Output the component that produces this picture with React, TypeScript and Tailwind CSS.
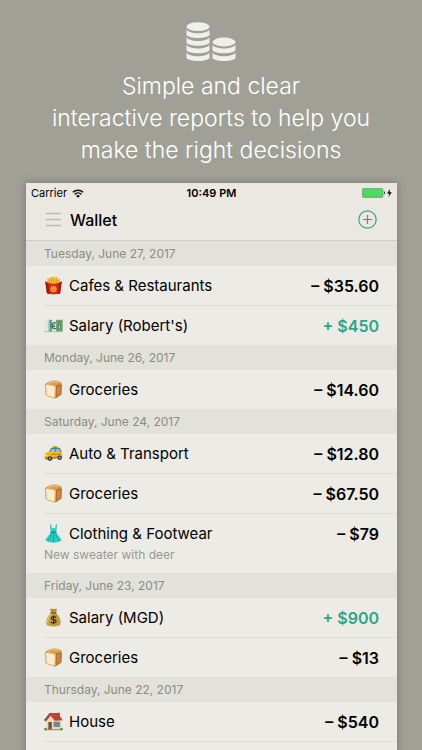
import type { ReactNode } from 'react'

type Entry = { icon: ReactNode; name: string; amount: string; income?: boolean; note?: string }
type Day = { date: string; entries: Entry[] }

function Coins() {
  // each number is the bottom edge of one coin
  const tall = [38, 45.7, 53.3, 61]
  const short = [53.3, 61]
  return (
    <svg width="50" height="40" viewBox="0 22 50 40" fill="#efefec" aria-hidden="true">
      <ellipse cx="12" cy="26.7" rx="11.5" ry="4.4" />
      {tall.map((y) => (
        <path key={y} d={`M.5 ${y - 8.5}c3 5 20 5 23 0v5c0 4.6-23 4.6-23 0z`} />
      ))}
      <ellipse cx="38" cy="42" rx="11.5" ry="4.4" />
      {short.map((y) => (
        <path key={y} d={`M26.5 ${y - 8.5}c3 5 20 5 23 0v5c0 4.6-23 4.6-23 0z`} />
      ))}
    </svg>
  )
}

function Wifi() {
  return (
    <svg width="12" height="9" viewBox="0 0 12 9" fill="none" stroke="#111" strokeWidth="1.5" aria-hidden="true">
      <path d="M.8 3.3a7.5 7.5 0 0 1 10.4 0M2.7 5.4a4.7 4.7 0 0 1 6.6 0" />
      <path d="M6 8.8 4 6.9a2.9 2.9 0 0 1 4 0z" fill="#111" stroke="none" />
    </svg>
  )
}

function Battery() {
  return (
    <svg width="30" height="10" viewBox="0 0 30 10" aria-hidden="true">
      <rect x=".4" y=".4" width="20.6" height="9" rx="1.5" fill="#4cd964" stroke="#6f8f70" strokeWidth=".7" />
      <path d="M22 3.3c1.3.4 1.3 2.8 0 3.2z" fill="#222" />
      <path d="M28.2.8 25 5.600h2.200L26.500 9l3.400-4.800h-2.300z" fill="#111" />
    </svg>
  )
}

const emoji = { width: 19, height: 19, viewBox: '0 0 20 20', 'aria-hidden': true } as const

function Fries() {
  return (
    <svg {...emoji}>
      <path d="M3.5 9 3 2.8 5 2.3l.5 3L6 1h2l.3 3.5L9 .6h2l.3 3.5.9-3.3 2 .3v3.5l1-2.2 1.9.5L16.3 9z" fill="#f6bd35" />
      <path d="M5.3 3v5M7.8 2v6M10.3 1.5V8M13 2v6M15.2 4v4" stroke="#cf8118" strokeWidth=".6" />
      <path d="M1.3 5.5c3 3.4 14.4 3.4 17.4 0L17 18c-.2 1.8-13.8 1.8-14 0z" fill="#d32b1e" />
      <path d="M1.3 5.5 3 18c.2.7 2 1 3 1.1L4.5 7.6zM18.7 5.5 17 18c-.2.7-1.5 1-2.5 1.1l1.2-11.5z" fill="#a91713" />
      <circle cx="10" cy="13.7" r="3.3" fill="#f2a82c" />
      <path d="M8.5 13.9c.8 1.6 2.3 1.6 3 0M8.7 12.3h.8M10.7 12.3h.8" stroke="#b6411a" strokeWidth=".8" fill="none" />
    </svg>
  )
}

function Euro() {
  return (
    <svg {...emoji}>
      <path d="M.3 4h19.4v12.5H.3z" fill="#dfe6dc" />
      <path d="M4.3 4H6v12.5H4.3z" fill="#b5c6c6" />
      <path d="M6 4h2.200v12.5H6z" fill="#3f9a7f" />
      <path d="M12.6 4h7.1v12.5h-7.1z" fill="#7fa377" />
      <path d="M12.8 7.5c-3-1.5-4.2.6-4.2 2.7s1.4 4.2 4.2 2.7M7.8 9.5h3.8M7.8 11h3.8" stroke="#27745a" strokeWidth="1.1" fill="none" />
      <path d="M14.8 14.5v-5l1.4-2 1.5 2v5M13.8 6h5" stroke="#4a7550" strokeWidth=".9" fill="none" />
      <path d="M16.3 9.8v3" stroke="#c9d8b9" strokeWidth="1" />
      <path d="M.3 16.5h19.4" stroke="#9fb29c" strokeWidth=".7" />
    </svg>
  )
}

function Bread() {
  return (
    <svg {...emoji}>
      <path d="M1 4.8C2.5 2.200 8.500.4 12 .6c4.500.3 7.500 2.300 6.800 4.700l-.6 10L12 19.400 1.800 16z" fill="#d99a4e" />
      <path d="M12.3 6.4c1.5-1.3 4.9-2.2 6.5-1.1l-.6 10L12 19.4z" fill="#b9702d" />
      <path d="M13.7 7.3c1-.8 2.6-1.2 3.8-1l-.5 8.2-3.3 2.3z" fill="#c98742" />
      <path d="M.9 5c1.2-1.6 4.5-.8 7.3-.1 3.3.8 5 1.1 4.500 3L12 19.400c-3.800-.7-7-1.600-10.200-3.400L1.600 7.900C.9 7 .6 6 .9 5z" fill="#e2aa63" />
      <path d="M2 5.6c1.5-1 4.3-.1 6.3.4 2.3.5 3.5.9 3.2 2.1L11 18.200c-3.200-.6-5.700-1.400-8.400-2.800l-.1-7.900C1.900 6.900 1.700 6.200 2 5.600z" fill="#faead0" />
      <path d="M4.5 3.4c3-1.4 8-1.8 11-.7" stroke="#edc07f" strokeWidth="1.3" fill="none" />
    </svg>
  )
}

function Taxi() {
  return (
    <svg {...emoji}>
      <path d="M9.5 2h4v2h-4z" fill="#e8aa20" />
      <path d="m5 9 2.300-4.700c2.200-1 7.500-1 9.500 0L19 9z" fill="#547f94" />
      <path d="M6.300 8.800 8 5.200h3.300v3.600zM12.500 5.200h3.600l1.400 3.600h-5z" fill="#78c8df" />
      <path d="M.6 11c.4-1.800 3-2.600 5.400-2.800h12.300c1.300 1.500 1.300 5-.1 6.500L2 16.200C.6 15.800.2 13 .6 11z" fill="#f3b61d" />
      <path d="M1 13.6c4 .5 9 .4 17.900-1.100v1.800L2 16.500z" fill="#bc7819" />
      <path d="M8 11h10" stroke="#363a35" strokeWidth=".8" strokeDasharray="1 1" />
      <circle cx="6.3" cy="15.3" r="2.5" fill="#333b40" />
      <circle cx="6.3" cy="15.3" r="1" fill="#abb3b6" />
      <circle cx="16.5" cy="14.5" r="2.4" fill="#333b40" />
      <circle cx="16.5" cy="14.5" r="1" fill="#abb3b6" />
      <circle cx="2" cy="11.8" r="1.1" fill="#fff3bd" />
    </svg>
  )
}

function Dress() {
  return (
    <svg {...emoji}>
      <path d="M7 .5 7.5 5M13 .5 12.5 5" stroke="#169f9d" strokeWidth="1" />
      <path d="M6.6 3.5c1 1.1 2.3 1.5 3.4.6 1.1.9 2.4.5 3.4-.6L13 8.600c1.300 3.300 4.300 5.400 5.600 8.600-3.500 3.300-13.700 3.300-17.200 0C2.700 14 5.700 11.900 7 8.600z" fill="#2dcbc3" />
      <path d="M8 10c-.8 3-2.300 5-3.700 7.600M10 10v9M12 10c.8 3 2.300 5 3.700 7.600" stroke="#169f9d" strokeWidth=".9" fill="none" />
      <path d="M7 8.7h6" stroke="#107f83" strokeWidth="1.2" />
    </svg>
  )
}

function MoneyBag() {
  return (
    <svg {...emoji}>
      <path d="M6.3 1.300c1.400-1 2.500.3 3.700-.6 1.200.9 2.300-.4 3.700.6L12.400 5H7.600z" fill="#b58e36" />
      <path d="M7.3 5.3h5.4c3.2 2.6 5.3 7 4.8 11.2-.3 3.800-14.700 3.800-15 0C2 12.300 4.100 7.900 7.300 5.300z" fill="#c29c43" />
      <path d="M4 16c-.4-3.600 1.300-7 3.800-9.500" stroke="#e4c778" strokeWidth="1.2" fill="none" />
      <path d="M6.8 5.2h6.4" stroke="#72531e" strokeWidth="1.3" />
      <path d="M12.8 9.9c-1.3-1.3-5.3-1.2-5.2.8.1 2 5.1 1.2 5.2 3.2.1 2.1-4 2.3-5.6.7M10.100 7.800v9.300" stroke="#3a3017" strokeWidth="1.3" fill="none" />
    </svg>
  )
}

function House() {
  return (
    <svg {...emoji}>
      <path d="M14.3.8h2.400v6h-2.400z" fill="#9c4439" />
      <path d="M2.5 9 7 3.500l11 5.300v9.700H2.500z" fill="#ead9b4" />
      <path d="M.3 8.800 6.500 1h8.200l5 7.700-8.400.4L7 4 2 10z" fill="#b8443c" />
      <path d="M.3 8.800 6.500 1" stroke="#7d302c" strokeWidth="1" />
      <path d="M4.6 10.500h3.600v8H4.600z" fill="#76503c" />
      <path d="M10.5 10.800h5.900v4.400h-5.900z" fill="#5a8fc6" stroke="#806f62" strokeWidth=".8" />
      <path d="M1 18.700h18" stroke="#8b8171" strokeWidth="1" />
      <circle cx="1.6" cy="18" r="1.4" fill="#548b3b" />
      <circle cx="18.4" cy="18" r="1.4" fill="#548b3b" />
    </svg>
  )
}

const DAYS: Day[] = [
  {
    date: 'Tuesday, June 27, 2017',
    entries: [
      { icon: <Fries />, name: 'Cafes & Restaurants', amount: '– $35.60' },
      { icon: <Euro />, name: "Salary (Robert's)", amount: '+ $450', income: true },
    ],
  },
  { date: 'Monday, June 26, 2017', entries: [{ icon: <Bread />, name: 'Groceries', amount: '– $14.60' }] },
  {
    date: 'Saturday, June 24, 2017',
    entries: [
      { icon: <Taxi />, name: 'Auto & Transport', amount: '– $12.80' },
      { icon: <Bread />, name: 'Groceries', amount: '– $67.50' },
      { icon: <Dress />, name: 'Clothing & Footwear', amount: '– $79', note: 'New sweater with deer' },
    ],
  },
  {
    date: 'Friday, June 23, 2017',
    entries: [
      { icon: <MoneyBag />, name: 'Salary (MGD)', amount: '+ $900', income: true },
      { icon: <Bread />, name: 'Groceries', amount: '– $13' },
    ],
  },
  { date: 'Thursday, June 22, 2017', entries: [{ icon: <House />, name: 'House', amount: '– $540' }] },
]

function EntryRow({ entry }: { entry: Entry }) {
  return (
    <li className="border-b border-[#dedcd7] pr-[18px] last:border-b-0">
      <div className="flex h-[39px] items-center">
        {entry.icon}
        <span className="ml-1.5 text-[15px] leading-6">{entry.name}</span>
        <span className={`ml-auto text-base leading-6 font-semibold ${entry.income ? 'text-[#2ba58a]' : ''}`}>
          {entry.amount}
        </span>
      </div>
      {entry.note && <p className="-mt-1.5 pb-2.5 text-xs leading-4 text-[#999993]">{entry.note}</p>}
    </li>
  )
}

export default function App() {
  return (
    <div className="h-screen overflow-hidden bg-[#a0a096] px-[26px] font-['Inter',sans-serif]">
      <header className="flex flex-col items-center pt-[22px] pb-[17px]">
        <Coins />
        <h1 className="mt-2 text-center text-[23px] leading-8 font-light whitespace-nowrap text-white">
          Simple and clear
          <br />
          interactive reports to help you
          <br />
          make the right decisions
        </h1>
      </header>

      <main className="-mr-px min-h-screen bg-[#edebe5] text-black shadow-[0_0_8px_rgba(0,0,0,0.25)]">
        {/* Status bar */}
        <div className="grid h-5 grid-cols-3 items-center bg-[#ebe8e2] px-[5px] text-[11px]">
          <span className="flex items-center gap-[5px]">
            Carrier <Wifi />
          </span>
          <span className="text-center font-semibold">10:49 PM</span>
          <span className="flex justify-end">
            <Battery />
          </span>
        </div>

        {/* Nav bar */}
        <div className="flex h-[38px] items-center border-b border-[#cfcec8] bg-[#ebe8e2] pr-5 pl-5 pb-1">
          <button type="button" aria-label="Menu">
            <svg width="15" height="15" viewBox="0 0 15 15" stroke="#bcbab4" strokeWidth="1.3">
              <path d="M0 1.5h15M0 7.5h15M0 13.5h15" />
            </svg>
          </button>
          <h2 className="ml-[9px] text-base font-medium">Wallet</h2>
          <button type="button" aria-label="Add entry" className="ml-auto">
            <svg width="19" height="19" viewBox="0 0 19 19" fill="none" stroke="#2ba58a" strokeWidth="1.2">
              <circle cx="9.5" cy="9.5" r="8.7" />
              <path d="M9.5 5v9M5 9.5h9" />
            </svg>
          </button>
        </div>

        {DAYS.map((day) => (
          <section key={day.date} className="group">
            <h3 className="flex h-[25px] items-center bg-[#e2e2da] px-[18px] text-xs text-[#8b8c86]">{day.date}</h3>
            <ul className="ml-[18px] border-[#dedcd7] group-last:border-b">
              {day.entries.map((entry) => (
                <EntryRow key={entry.name} entry={entry} />
              ))}
            </ul>
          </section>
        ))}
      </main>
    </div>
  )
}
